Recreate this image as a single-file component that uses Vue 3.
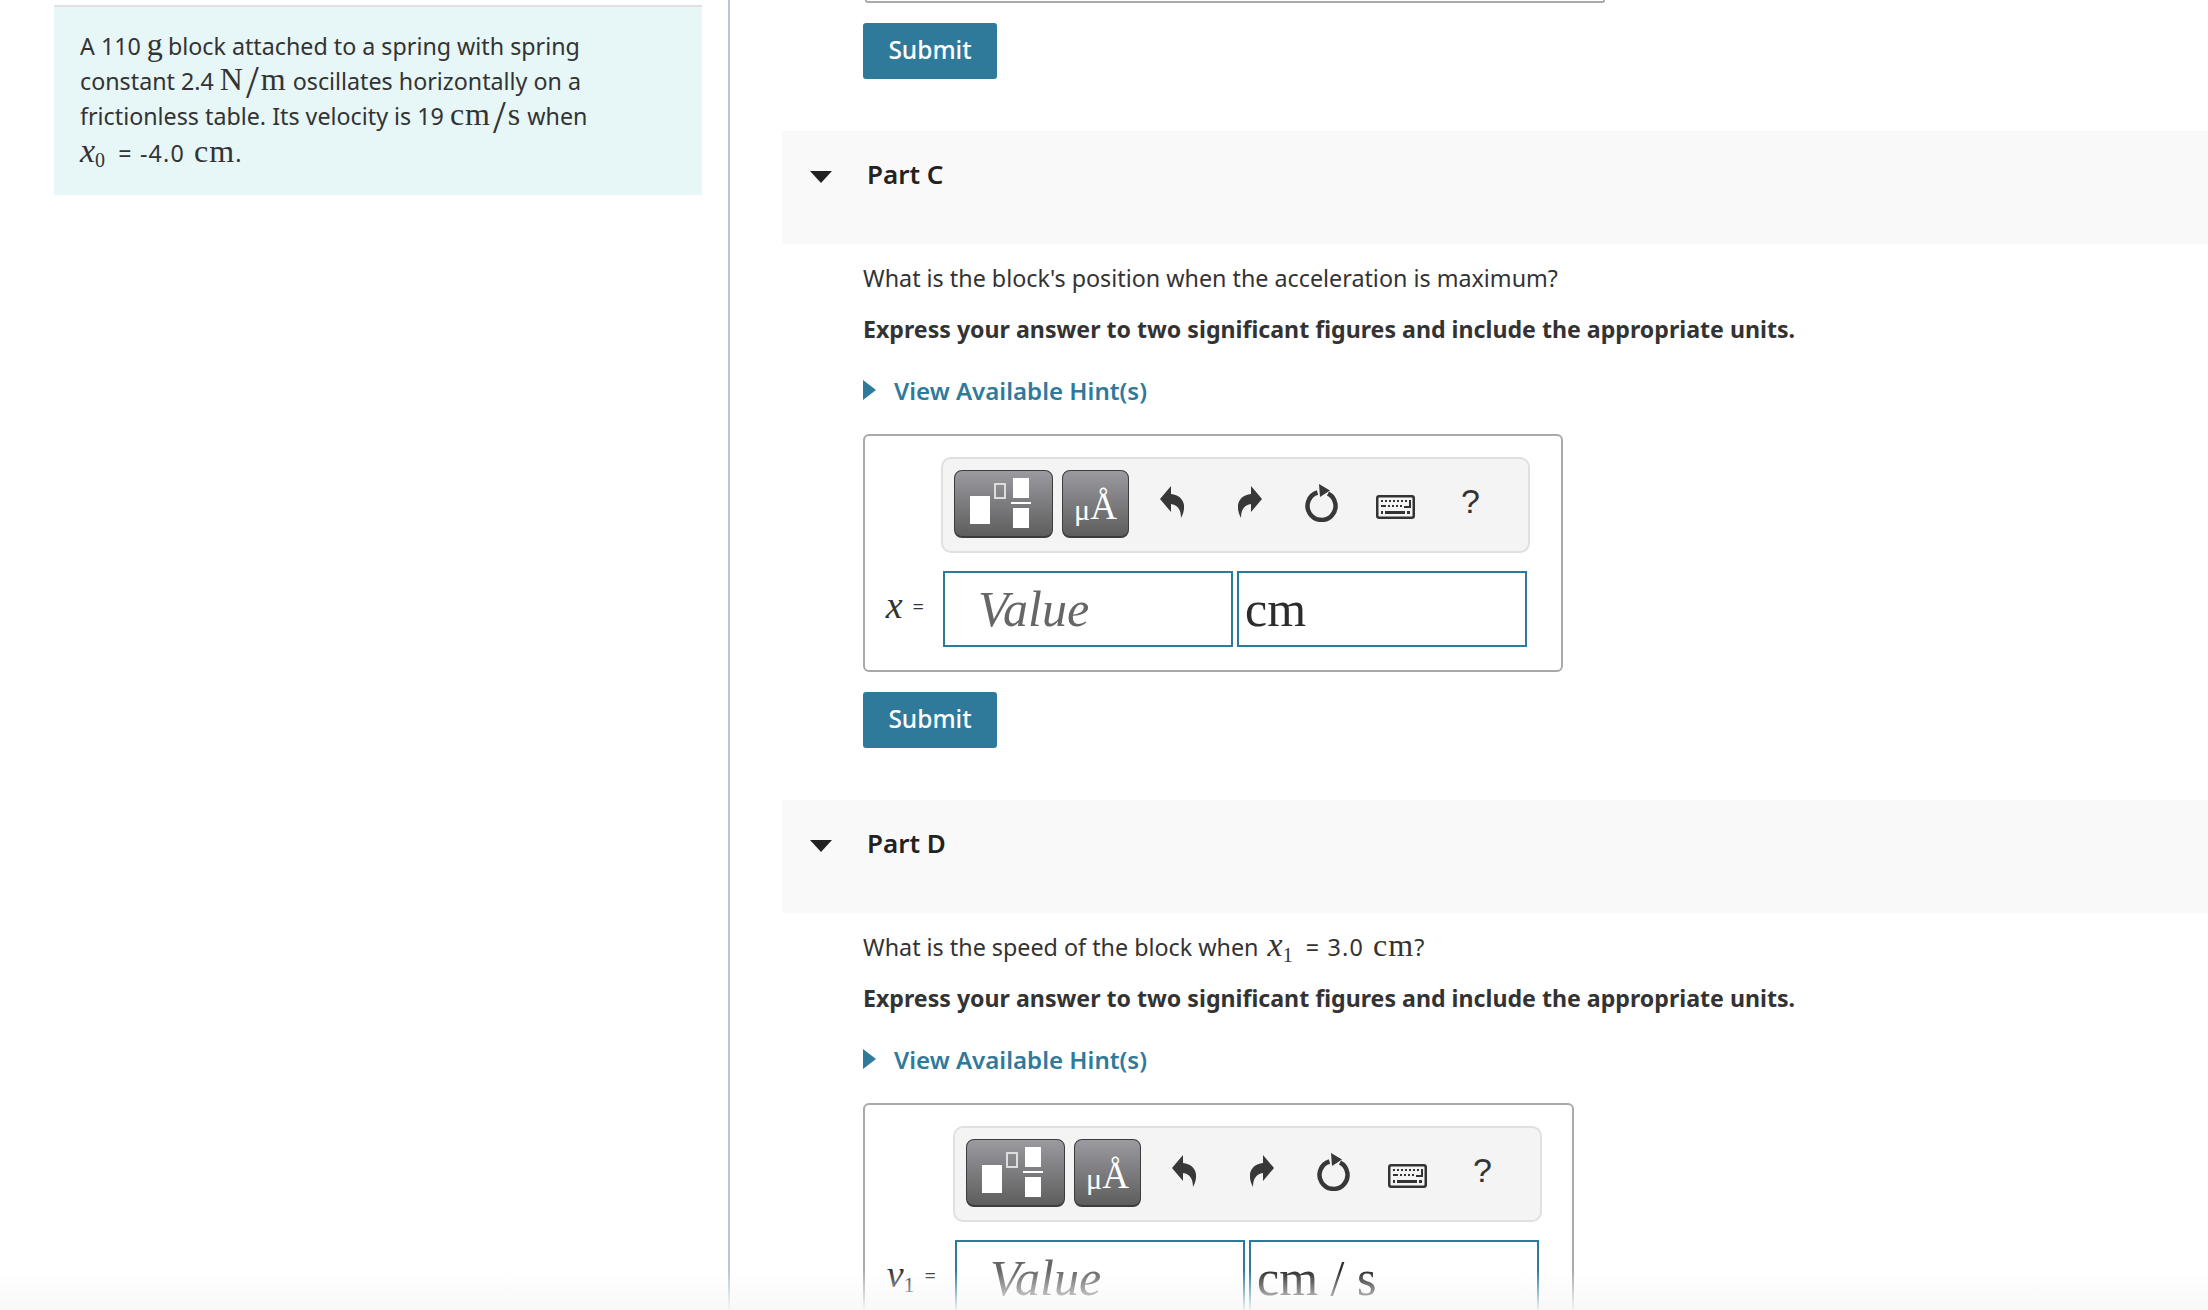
<template>
  <div class="page">
    <aside class="left">
      <div class="intro">
        <p>A 110 <span class="m big tight">g</span> block attached to a spring with spring</p>
        <p>constant 2.4 <span class="m big">N</span><span class="slash">/</span><span class="m big">m</span> oscillates horizontally on a</p>
        <p>frictionless table. Its velocity is 19 <span class="m big">cm</span><span class="slash">/</span><span class="m big">s</span> when</p>
        <p><i class="mi">x</i><sub class="m">0</sub> <span class="spaced">= -4.0</span> <span class="m big">cm</span>.</p>
      </div>
    </aside>

    <main class="right">
      <div class="cut-box"></div>
      <button class="submit first">Submit</button>

      <section v-for="part in parts" :key="part.name" class="part">
        <header class="part-head">
          <svg class="caret" width="22" height="12" viewBox="0 0 22 12"><path d="M0 0H22L11 12Z" fill="#222" /></svg>
          <h3>{{ part.name }}</h3>
        </header>
        <div class="part-body">
          <p v-if="part.name === 'Part C'" class="question">What is the block's position when the acceleration is maximum?</p>
          <p v-else class="question">What is the speed of the block when <i class="mi">x</i><sub class="m">1</sub> <span class="spaced">= 3.0</span> <span class="m big">cm</span>?</p>
          <p class="express">Express your answer to two significant figures and include the appropriate units.</p>
          <div class="hint">
            <svg width="13" height="20" viewBox="0 0 13 20"><path d="M0 0L13 10L0 20Z" fill="#2f7a9b" /></svg>
            <span>View Available Hint(s)</span>
          </div>

          <div class="answer" :class="part.cls">
            <div class="toolbar">
              <button class="tool wide">
                <svg width="99" height="68" viewBox="0 0 99 68">
                  <rect x="16" y="26" width="20" height="28" fill="#fff" />
                  <rect x="41" y="14" width="10" height="14" fill="none" stroke="#ddd" stroke-width="2" />
                  <rect x="59" y="8" width="16" height="20" fill="#fff" />
                  <rect x="57" y="32" width="20" height="2" fill="#fff" />
                  <rect x="59" y="38" width="16" height="20" fill="#fff" />
                </svg>
              </button>
              <button class="tool unit"><span class="mu">μ</span><span class="ang">Å</span></button>
              <svg class="ico undo" width="24" height="32" viewBox="0 0 24 32"><path d="M11 0V8C20 9 25 15 24 23C23.600 27 22 30 21 32C21 24 18 19 11 18V26L0 13Z" fill="#383838" /></svg>
              <svg class="ico redo" width="24" height="32" viewBox="0 0 24 32"><path d="M13 0V8C4 9-1 15 0 23C.4 27 2 30 3 32C3 24 6 19 13 18V26L24 13Z" fill="#383838" /></svg>
              <svg class="ico reset" width="34" height="38" viewBox="0 0 34 38"><path d="M12.500 8.500A14 14 0 1 0 23 9.500" fill="none" stroke="#383838" stroke-width="4.500" /><path d="M14 0L25 6.500L15 13Z" fill="#383838" /></svg>
              <svg class="ico keys" width="39" height="24" viewBox="0 0 39 24">
                <rect x="1.250" y="1.250" width="36.500" height="21.500" rx="2" fill="#f4f4f4" stroke="#333" stroke-width="2.500" />
                <path d="M5 5h2v2h-2zM9 5h2v2h-2zM13 5h2v2h-2zM17 5h2v2h-2zM21 5h2v2h-2zM25 5h2v2h-2zM29 5h2v2h-2zM33 5h2v8h-7v-2h5zM5 10h5v2h-5zM12 10h2v2h-2zM16 10h2v2h-2zM20 10h2v2h-2zM24 10h2v2h-2zM5 16h2v3h-2zM9 16h20v3h-20zM31 16h3v3h-3z" fill="#333" />
              </svg>
              <span class="help">?</span>
            </div>
            <div class="inputs">
              <label class="var"><i class="mi">{{ part.varName }}</i><sub v-if="part.varSub" class="m">{{ part.varSub }}</sub><span class="eq">=</span></label>
              <div class="field value">Value</div>
              <div class="field units">{{ part.units }}</div>
            </div>
          </div>
          <button v-if="part.name === 'Part C'" class="submit">Submit</button>
        </div>
      </section>
    </main>
    <div class="fade"></div>
  </div>
</template>

<script setup>
const parts = [
  { name: 'Part C', cls: 'answer-c', varName: 'x', varSub: '', units: 'cm' },
  { name: 'Part D', cls: 'answer-d', varName: 'v', varSub: '1', units: 'cm / s' }
]
</script>

<style>
html, body {
  margin: 0;
  background: #fff;
}
</style>

<style scoped>
.page {
  position: relative;
  display: flex;
  width: 2208px;
  height: 1310px;
  overflow: hidden;
  background: #fff;
  color: #333;
  font-family: "Noto Sans", "Open Sans", sans-serif;
  font-size: 23.250px;
}

p {
  margin: 0;
}

.left {
  width: 730px;
  flex: none;
  box-sizing: border-box;
  padding: 5px 0 0 54px;
  border-right: 2px solid #b4c7dc;
}

.intro {
  width: 648px;
  height: 190px;
  box-sizing: border-box;
  padding: 21px 26px 0;
  background: #e7f6f6;
  border-top: 2px solid #e0e0e0;
}

.intro p {
  height: 35.200px;
  line-height: 35.200px;
  white-space: nowrap;
}

.m {
  font-family: "Liberation Serif", serif;
}

.mi {
  font-family: "Liberation Serif", serif;
  font-size: 34px;
  font-style: italic;
  line-height: 1;
}

.big {
  font-size: 32px;
  line-height: 1;
  letter-spacing: 1px;
}

.tight {
  margin-right: -2px;
}

.spaced {
  margin: 0 3px 0 4px;
  letter-spacing: 1.200px;
}

.slash {
  margin: 0 2px;
  font-family: "Liberation Serif", serif;
  font-size: 46px;
  line-height: 0;
  vertical-align: -8px;
}

sub {
  margin-right: 3px;
  font-size: 20px;
  line-height: 0;
}

.right {
  flex: 1;
  min-width: 0;
  padding-left: 52px;
}

.cut-box {
  width: 740px;
  height: 3px;
  box-sizing: border-box;
  margin-left: 83px;
  border: 2px solid #a9a9a9;
  border-top: 0;
  border-radius: 0 0 6px 6px;
}

.submit {
  display: block;
  width: 134px;
  height: 56px;
  padding: 0 0 3px;
  border: 0;
  border-radius: 3px;
  background: #2f7a9b;
  color: #fff;
  font-family: inherit;
  font-size: 24.500px;
  font-weight: 500;
}

.submit.first {
  margin: 20px 0 52px 81px;
}

.part-head {
  display: flex;
  align-items: flex-start;
  height: 113px;
  margin-bottom: 9px;
  background: #f9f9f9;
}

.caret {
  margin: 40px 0 0 28px;
}

.part-head h3 {
  margin: 26px 0 0 35px;
  font-size: 26px;
  font-weight: 600;
  line-height: 34px;
  color: #222;
}

.part-body {
  padding-left: 81px;
}

.question {
  height: 50px;
  line-height: 50px;
  font-size: 23.300px;
}

.question .mi {
  margin-left: 3px;
}

.express {
  margin-top: 1px;
  height: 50px;
  line-height: 50px;
  font-size: 23.150px;
  font-weight: 700;
}

.hint {
  display: flex;
  align-items: center;
  gap: 18px;
  height: 72px;
  color: #2f7a9b;
  font-size: 24.100px;
  font-weight: 600;
}

.answer {
  box-sizing: border-box;
  margin: 8px 0 0;
  padding: 21px 24px 0 0;
  border: 2px solid #a9a9a9;
  border-radius: 6px;
}

.answer-c {
  width: 700px;
  height: 238px;
  margin-bottom: 20px;
}

.answer-d {
  width: 711px;
  height: 300px;
}

.part-body > .submit {
  margin-bottom: 52px;
}

.toolbar {
  display: flex;
  align-items: flex-start;
  box-sizing: border-box;
  height: 96px;
  padding: 11px 0 0 11px;
  background: #f4f4f4;
  border: 2px solid #e0e0e0;
  border-radius: 10px;
}

.answer-c .toolbar {
  width: 589px;
  margin-left: 76px;
}

.answer-d .toolbar {
  width: 589px;
  margin-left: 88px;
}

.tool {
  height: 68px;
  padding: 0;
  border: 1px solid #3c3c3c;
  border-bottom-width: 2px;
  border-radius: 8px;
  background: linear-gradient(#9a9aa0, #5e5e5e);
  overflow: hidden;
}

.tool.wide {
  width: 99px;
  margin-right: 9px;
}

.tool.wide svg {
  display: block;
  margin: -1px;
}

.tool.unit {
  display: flex;
  align-items: flex-end;
  justify-content: center;
  width: 67px;
  padding-bottom: 11px;
  color: #fff;
  font-family: "Liberation Serif", serif;
  line-height: 1;
}

.mu {
  font-size: 30px;
}

.ang {
  font-size: 37px;
}

.ico {
  flex: none;
}

.undo {
  margin: 16px 0 0 31px;
}

.redo {
  margin: 16px 0 0 54px;
}

.reset {
  margin: 14px 0 0 43px;
}

.keys {
  margin: 25px 0 0 37px;
}

.help {
  margin: 11px 0 0 46px;
  font-family: "Liberation Sans", sans-serif;
  font-size: 34px;
  line-height: 40px;
  color: #333;
}

.inputs {
  display: flex;
  align-items: flex-start;
  margin-top: 18px;
}

.var {
  display: flex;
  align-items: baseline;
  justify-content: flex-end;
  box-sizing: border-box;
  width: 78px;
  padding: 15px 19px 0 0;
  line-height: 32px;
}

.var .mi {
  font-size: 38px;
}

.var sub {
  margin-right: 0;
  font-size: 22px;
  transform: translateY(5px);
}

.answer-d .var {
  width: 90px;
}

.eq {
  margin-left: 10px;
  font-size: 20px;
  transform: translateY(-4px);
}

.field {
  box-sizing: border-box;
  height: 76px;
  border: 2px solid #2f7a9b;
  background: #fff;
  font-family: "Liberation Serif", serif;
  font-size: 50px;
  line-height: 72px;
}

.value {
  width: 290px;
  margin-right: 4px;
  padding-left: 33px;
  color: #666;
  font-style: italic;
}

.units {
  width: 290px;
  padding-left: 6px;
  color: #2c2c2c;
}

.fade {
  position: absolute;
  left: 0;
  right: 0;
  bottom: 0;
  height: 40px;
  background: linear-gradient(rgba(248, 248, 248, 0), rgba(248, 248, 248, .95));
  pointer-events: none;
}
</style>
